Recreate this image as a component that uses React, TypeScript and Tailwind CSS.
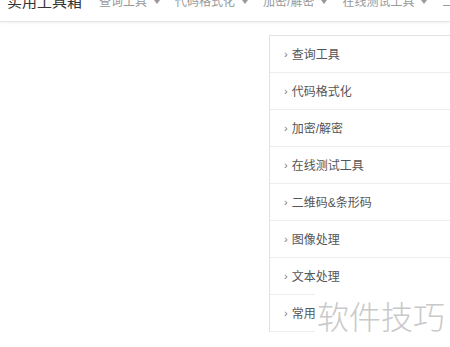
import React from "react";

const navItems = ["查询工具", "代码格式化", "加密/解密", "在线测试工具", "二维码&条形码"];
const menu = ["查询工具", "代码格式化", "加密/解密", "在线测试工具", "二维码&条形码", "图像处理", "文本处理", "常用"];

export default function App() {
  return (
    <div
      className="relative w-[450px] h-[347px] overflow-hidden bg-white"
      style={{ fontFamily: '"Liberation Sans", "Noto Sans CJK SC", sans-serif' }}
    >
      <div className="-mt-[17px] h-[39px] flex items-center whitespace-nowrap border-b border-[#e5e5e5] shadow-[0_1px_3px_rgba(0,0,0,0.06)] pl-[7px]">
        <span className="text-[15px] text-[#333] mr-[17px]">实用工具箱</span>
        {navItems.map((n) => (
          <span key={n} className="text-[12px] text-[#999] mr-[15px] flex items-center">
            {n}
            <span className="ml-[7px] inline-block w-0 h-0 border-l-[3px] border-r-[3px] border-t-[4px] border-l-transparent border-r-transparent border-t-[#999]" />
          </span>
        ))}
      </div>
      <div className="ml-[269px] mt-[13px] w-[200px] border-l border-t border-[#e2e2e2]">
        {menu.map((m) => (
          <div key={m} className="h-[37px] flex items-center border-b border-[#eeeeee] pl-[14px] pt-[1px] text-[12px] text-[#555]">
            <span className="text-[#777] mr-[4px] text-[11px]">›</span>
            {m}
          </div>
        ))}
      </div>
      <div className="absolute left-[315px] top-[291px] w-[140px] h-[48px] bg-white flex items-center">
        <span className="text-[32px] leading-none text-[#c9c9c9] pl-[2px]" style={{ fontFamily: '"Noto Sans CJK SC", sans-serif', fontWeight: 300 }}>
          软件技巧
        </span>
      </div>
    </div>
  );
}
